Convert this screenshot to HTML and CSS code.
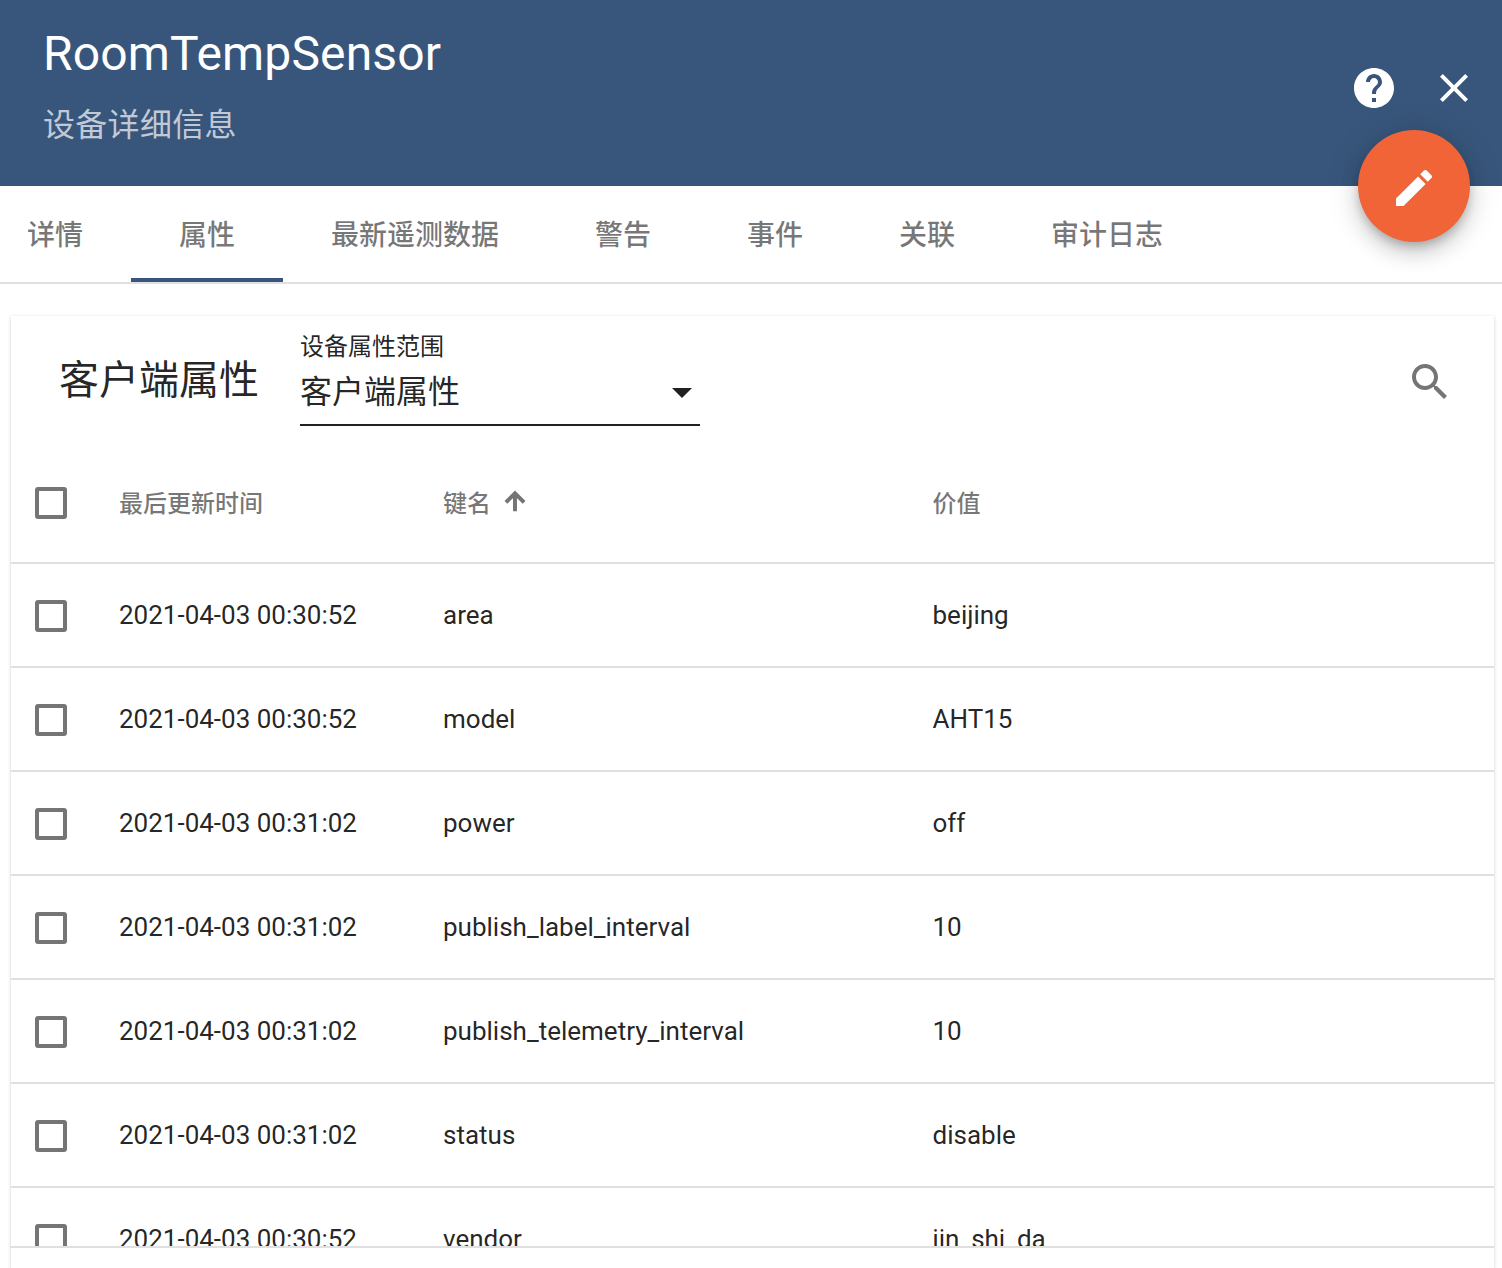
FILE: index.html
```html
<!DOCTYPE html>
<html lang="zh">
<head>
<meta charset="utf-8">
<title>RoomTempSensor</title>
<link rel="stylesheet" href="styles.css">
</head>
<body>
<div class="page">
  <header class="header">
    <div class="titles">
      <h1 class="title">RoomTempSensor</h1>
      <div class="subtitle">设备详细信息</div>
    </div>
    <div class="actions">
      <svg class="icon-help" viewBox="0 0 24 24"><path fill="#fff" d="M12 2C6.48 2 2 6.48 2 12s4.48 10 10 10 10-4.48 10-10S17.52 2 12 2zm1 17h-2v-2h2v2zm2.07-7.75l-.9.92C13.45 12.9 13 13.5 13 15h-2v-.5c0-1.1.45-2.1 1.17-2.83l1.24-1.26c.37-.36.59-.86.59-1.41 0-1.1-.9-2-2-2s-2 .9-2 2H8c0-2.21 1.79-4 4-4s4 1.79 4 4c0 .88-.36 1.68-.93 2.25z"/></svg>
      <svg class="icon-close" viewBox="0 0 24 24"><path fill="#fff" d="M19 6.41L17.59 5 12 10.59 6.41 5 5 6.41 10.59 12 5 17.59 6.41 19 12 13.41 17.59 19 19 17.59 13.41 12z"/></svg>
    </div>
    <button class="fab"><svg class="icon-edit" viewBox="0 0 24 24"><path fill="#fff" d="M3 17.25V21h3.75L17.81 9.94l-3.75-3.75L3 17.25zM20.71 7.04c.39-.39.39-1.02 0-1.41l-2.34-2.34c-.39-.39-1.02-.39-1.41 0l-1.83 1.83 3.75 3.75 1.83-1.83z"/></svg></button>
  </header>

  <nav class="tabs">
    <div class="tab">详情</div>
    <div class="tab active">属性</div>
    <div class="tab">最新遥测数据</div>
    <div class="tab">警告</div>
    <div class="tab">事件</div>
    <div class="tab">关联</div>
    <div class="tab">审计日志</div>
  </nav>

  <section class="card">
    <div class="card-scroll">
      <div class="toolbar">
        <div class="card-title">客户端属性</div>
        <div class="select">
          <div class="select-label">设备属性范围</div>
          <div class="select-value"><span class="select-text">客户端属性</span><i class="arrow"></i></div>
        </div>
        <svg class="icon-search" viewBox="0 0 24 24"><path fill="#757575" d="M15.5 14h-.79l-.28-.27C15.41 12.59 16 11.11 16 9.5 16 5.91 13.09 3 9.5 3S3 5.91 3 9.5 5.91 16 9.5 16c1.61 0 3.09-.59 4.23-1.57l.27.28v.79l5 4.99L20.49 19l-4.99-5zm-6 0C7.01 14 5 11.99 5 9.5S7.01 5 9.5 5 14 7.01 14 9.5 11.99 14 9.5 14z"/></svg>
      </div>

      <div class="row head">
        <div class="c-check"><i class="checkbox"></i></div>
        <div class="c-time">最后更新时间</div>
        <div class="c-key">键名<svg class="icon-sort" viewBox="0 0 24 24"><path fill="#757575" stroke="#757575" stroke-width="1.4" d="M4 12l1.41 1.41L11 7.83V20h2V7.83l5.58 5.59L20 12l-8-8-8 8z"/></svg></div>
        <div class="c-val">价值</div>
      </div>

      <div class="row"><div class="c-check"><i class="checkbox"></i></div><div class="c-time">2021-04-03 00:30:52</div><div class="c-key">area</div><div class="c-val">beijing</div></div>
      <div class="row"><div class="c-check"><i class="checkbox"></i></div><div class="c-time">2021-04-03 00:30:52</div><div class="c-key">model</div><div class="c-val">AHT15</div></div>
      <div class="row"><div class="c-check"><i class="checkbox"></i></div><div class="c-time">2021-04-03 00:31:02</div><div class="c-key">power</div><div class="c-val">off</div></div>
      <div class="row"><div class="c-check"><i class="checkbox"></i></div><div class="c-time">2021-04-03 00:31:02</div><div class="c-key">publish_label_interval</div><div class="c-val">10</div></div>
      <div class="row"><div class="c-check"><i class="checkbox"></i></div><div class="c-time">2021-04-03 00:31:02</div><div class="c-key">publish_telemetry_interval</div><div class="c-val">10</div></div>
      <div class="row"><div class="c-check"><i class="checkbox"></i></div><div class="c-time">2021-04-03 00:31:02</div><div class="c-key">status</div><div class="c-val">disable</div></div>
      <div class="row"><div class="c-check"><i class="checkbox"></i></div><div class="c-time">2021-04-03 00:30:52</div><div class="c-key">vendor</div><div class="c-val">jin_shi_da</div></div>
    </div>
    <div class="card-foot"></div>
  </section>
</div>
</body>
</html>
```

FILE: styles.css
```css
* { box-sizing: border-box; }
html, body { margin: 0; height: 100%; background: #fff; overflow: hidden; }
body { font-family: Roboto, "Noto Sans CJK SC", sans-serif; color: rgba(0,0,0,.87); }
.page { height: 1268px; overflow: hidden; display: flex; flex-direction: column; }

.header { position: relative; height: 186px; flex: none; background: #38557b; display: flex; justify-content: space-between; padding: 23px 24px 0 43px; color: #fff; }
.title { margin: 0; font-size: 48px; line-height: 62px; font-weight: 400; letter-spacing: .15px; }
.subtitle { margin-top: 16px; font-size: 32px; line-height: 48px; letter-spacing: .3px; color: rgba(255,255,255,.7); }
.actions { display: flex; gap: 32px; height: 48px; margin-top: 41px; }
.icon-help, .icon-close { width: 48px; height: 48px; display: block; }
.fab { position: absolute; right: 32px; top: 130px; width: 112px; height: 112px; border: 0; padding: 0; border-radius: 50%; background: #f06437; display: flex; align-items: center; justify-content: center; box-shadow: 0 6px 10px -2px rgba(0,0,0,.2), 0 12px 20px 0 rgba(0,0,0,.14), 0 2px 36px 0 rgba(0,0,0,.12); }
.icon-edit { width: 48px; height: 48px; display: block; margin-top: 4px; }

.tabs { height: 98px; flex: none; display: flex; margin-left: -21px; border-bottom: 2px solid #e0e0e0; font-size: 28px; color: rgba(0,0,0,.54); width: calc(100% + 21px); }
.tab { height: 96px; padding: 2px 48px 0; min-width: 152px; display: flex; align-items: center; justify-content: center; font-weight: 500; white-space: nowrap; border-bottom: 4px solid transparent; }
.tab.active { border-bottom-color: #38557b; }

.card { margin: 32px 8px 0 11px; flex: 1; min-height: 0; display: flex; flex-direction: column; background: #fff; box-shadow: 0 1px 4px rgba(0,0,0,.14), 0 1px 2px rgba(0,0,0,.08); }
.card-scroll { flex: 1; min-height: 0; overflow: hidden; }
.card-foot { height: 22px; flex: none; border-top: 2px solid #e0e0e0; margin-left: -1px; }

.toolbar { height: 134px; display: flex; align-items: flex-start; padding-left: 48px; position: relative; }
.card-title { font-size: 40px; line-height: 56px; margin-top: 37px; width: 241px; flex: none; }
.select { width: 400px; flex: none; padding-top: 15px; }
.select-label { font-size: 24px; line-height: 32px; }
.select-value { height: 63px; border-bottom: 2px solid #212121; font-size: 32px; display: flex; align-items: center; justify-content: space-between; padding: 0 8px 0 0; }
.select-text { margin-top: -9px; }
.arrow { width: 0; height: 0; border-left: 10px solid transparent; border-right: 10px solid transparent; border-top: 10px solid rgba(0,0,0,.87); margin-top: -2px; }
.icon-search { position: absolute; right: 40px; top: 42px; width: 48px; height: 48px; }

.row { height: 104px; display: flex; align-items: center; border-bottom: 2px solid #e0e0e0; font-size: 26px; white-space: nowrap; }
.head { height: 114px; font-size: 24px; font-weight: 500; color: rgba(0,0,0,.54); padding-bottom: 10px; }
.c-check { width: 108px; padding-left: 24px; flex: none; display: flex; margin-top: 2px; }
.head .c-check { margin-top: 4px; }
.c-time { width: 324px; flex: none; }
.c-key { width: 489.5px; flex: none; display: flex; align-items: center; }
.c-val { flex: 1; }
.checkbox { width: 32px; height: 32px; border: 4px solid #757575; border-radius: 3px; display: block; }
.icon-sort { width: 28px; height: 28px; margin-left: 10px; margin-top: 0; }
```
